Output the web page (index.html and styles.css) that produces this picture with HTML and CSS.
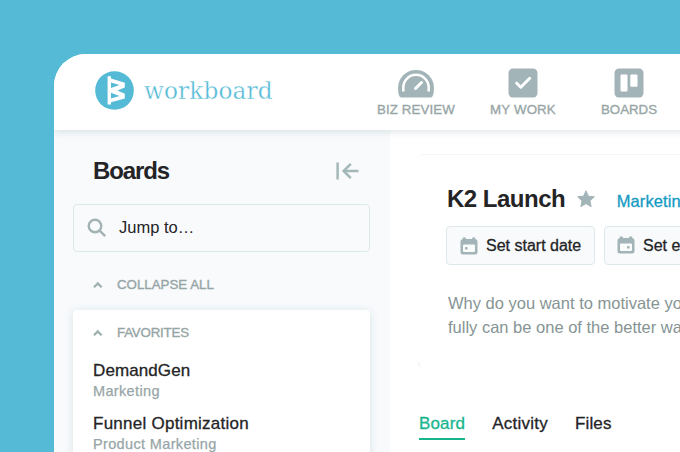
FILE: index.html
```html
<!DOCTYPE html>
<html lang="en">
<head>
<meta charset="utf-8">
<title>Workboard</title>
<link rel="stylesheet" href="styles.css">
</head>
<body>
<div class="app">
  <header class="topbar">
    <div class="brand">
      <svg width="39" height="39" viewBox="0 0 39 39"><circle cx="19.5" cy="19.5" r="19.3" fill="#54bad5"/><path d="M12.600 5.300L16 5.300V7.600L29.800 11.700V16.500L22.500 19.500L29.800 22.700V27.600L16 31.200V33.500H12.600ZM16 11.500V17L24.500 13.900ZM16 21.800V27.400L24.500 25Z" fill="#fff" fill-rule="evenodd"/></svg>
      <span class="brand-name">workboard</span>
    </div>
    <nav class="nav">
      <a class="nav-item nav-review">
        <svg width="38" height="30" viewBox="0 0 38 30"><path d="M4.500 29.500Q1 29.500 1 20A18 18 0 0 1 37 20Q37 29.500 33.500 29.500Z" fill="#a3b4b8"/><path d="M6.300 23.500V19.500A12.700 12.700 0 0 1 31.700 19.500V23.500" fill="none" stroke="#fff" stroke-width="2.500"/><path d="M18.500 20.500L24.500 14.500" stroke="#fff" stroke-width="3" stroke-linecap="round"/></svg>
        <span>BIZ REVIEW</span>
      </a>
      <a class="nav-item nav-work">
        <svg width="30" height="30" viewBox="0 0 30 30"><rect x=".5" y=".5" width="29" height="29" rx="4.500" fill="#a3b4b8"/><path d="M8.700 15.200L12.800 19.200L21.700 10.300" fill="none" stroke="#fff" stroke-width="3" stroke-linecap="round" stroke-linejoin="round"/></svg>
        <span>MY WORK</span>
      </a>
      <a class="nav-item nav-boards">
        <svg width="30" height="30" viewBox="0 0 30 30"><rect x=".5" y=".5" width="29" height="29" rx="4.500" fill="#a3b4b8"/><rect x="6.500" y="6.500" width="7" height="17" rx="1" fill="#fff"/><rect x="16.300" y="6.500" width="7.200" height="12.300" rx="1" fill="#fff"/></svg>
        <span>BOARDS</span>
      </a>
    </nav>
  </header>
  <div class="columns">
    <aside class="sidebar">
      <div class="side-head">
        <h2>Boards</h2>
        <svg width="24" height="20" viewBox="0 0 24 20" fill="none" stroke="#a3b9b9" stroke-width="2.500"><path d="M1.600 1.500V18.500M22.500 10H8M14.800 2.800L7.600 10L14.800 17.200"/></svg>
      </div>
      <div class="search">
        <svg width="20" height="20" viewBox="0 0 20 20" fill="none" stroke="#a3b2b4" stroke-width="2.400"><circle cx="8" cy="8" r="6.300"/><path d="M12.600 12.600L18.200 18.200"/></svg>
        <span>Jump to…</span>
      </div>
      <div class="group-label collapse">
        <svg width="10" height="8" viewBox="0 0 10 8"><path d="M1 6.300L4.800 2.400L8.600 6.300" fill="none" stroke="#9eafaf" stroke-width="2.200"/></svg>
        <span>COLLAPSE ALL</span>
      </div>
      <section class="favorites">
        <div class="group-label">
          <svg width="10" height="8" viewBox="0 0 10 8"><path d="M1 6.300L4.800 2.400L8.600 6.300" fill="none" stroke="#9eafaf" stroke-width="2.200"/></svg>
          <span class="fav-label">FAVORITES</span>
        </div>
        <div class="entry first"><b>DemandGen</b><small>Marketing</small></div>
        <div class="entry"><b class="wide">Funnel Optimization</b><small>Product Marketing</small></div>
      </section>
    </aside>
    <main class="main">
      <section class="board">
        <div class="title-row">
          <h1>K2 Launch</h1>
          <svg width="18" height="18" viewBox="0 0 18 18"><path d="M9 .8L11.400 6.200L17.300 6.800L12.900 10.800L14.200 16.600L9 13.600L3.800 16.600L5.100 10.800L.7 6.800L6.600 6.200Z" fill="#a3b4b8" stroke="#a3b4b8" stroke-linejoin="round"/></svg>
          <a class="team">Marketing</a>
        </div>
        <div class="dates">
          <div class="date-btn">
            <svg width="18" height="18" viewBox="0 0 18 18"><path d="M2.800 .5h3V2h6.400V.500H15.200V2Q17.500 2 17.500 4.500V15Q17.500 17.500 15 17.500H3Q.5 17.500 .5 15V4.500Q.5 2 2.800 2Z" fill="#a3b4b8"/><rect x="3" y="7.500" width="12" height="7.500" rx="1" fill="#fafcfc"/><rect x="5" y="10" width="2.600" height="2.600" rx=".7" fill="#a3b4b8"/></svg>
            <span>Set start date</span>
          </div>
          <div class="date-btn end">
            <svg width="18" height="18" viewBox="0 0 18 18"><path d="M2.800 .5h3V2h6.400V.500H15.200V2Q17.500 2 17.500 4.500V15Q17.500 17.500 15 17.500H3Q.5 17.500 .5 15V4.500Q.5 2 2.800 2Z" fill="#a3b4b8"/><rect x="3" y="7.500" width="12" height="7.500" rx="1" fill="#fafcfc"/><rect x="10" y="10" width="2.600" height="2.600" rx=".7" fill="#a3b4b8"/></svg>
            <span>Set end date</span>
          </div>
        </div>
        <p>Why do you want to motivate you<br>fully can be one of the better ways</p>
        <svg class="corner" width="3" height="5" viewBox="0 0 3 5"><path d="M.5 0Q.5 3 2.500 4.500" fill="none" stroke="#e6eaea"/></svg>
      </section>
      <nav class="tabs">
        <a class="active">Board</a><a class="activity">Activity</a><a>Files</a>
      </nav>
    </main>
  </div>
</div>
</body>
</html>
```
FILE: styles.css
```css
* { box-sizing: border-box; }
body {
  margin: 0;
  width: 680px;
  height: 452px;
  overflow: hidden;
  padding: 54px 0 0 54px;
  background: #54bad5;
  font-family: "Liberation Sans", Arial, sans-serif;
  color: #242426;
}
svg { display: block; flex: none; }
h1, h2, p { margin: 0; }
span, a, b, small { white-space: nowrap; }
.app {
  width: 626px;
  height: 398px;
  border-radius: 32px 0 0 0;
  overflow: hidden;
  background: #fff;
}
.topbar {
  position: relative;
  z-index: 1;
  display: flex;
  height: 76px;
  margin-right: -16px;
  padding-left: 41px;
  background: #fff;
  box-shadow: 0 1px 8px rgba(90, 125, 135, .24);
}
.brand { display: flex; width: 282px; padding-top: 17px; gap: 10px; }
.brand-name {
  font: 25px/40px "DejaVu Serif", serif;
  letter-spacing: .1px;
  color: #54bad5;
  -webkit-text-stroke: .35px #fff;
  transform: scaleX(.93);
  transform-origin: 0 50%;
}
.nav { display: flex; padding-top: 14px; }
.nav-item {
  display: flex;
  flex-direction: column;
  align-items: center;
  font-size: 13.3px;
  line-height: 16px;
  gap: 4px;
  color: #98a6a6;
  -webkit-text-stroke: .35px #98a6a6;
}
.nav-review { width: 78px; letter-spacing: .1px; }
.nav-work { width: 68px; margin-left: 34px; letter-spacing: .15px; }
.nav-boards { width: 58px; margin-left: 43px; }
.columns { display: flex; height: 322px; }
.sidebar { width: 336px; padding: 0 20px; background: #f8fafc; flex: none; }
.side-head {
  display: flex;
  justify-content: space-between;
  align-items: center;
  height: 74px;
  padding: 8px 10px 0 19px;
}
h2 { font-size: 24px; line-height: 28px; letter-spacing: -1.1px; }
.search {
  display: flex;
  align-items: center;
  gap: 12px;
  width: 297px;
  height: 48px;
  margin-left: -1px;
  padding: 0 13px;
  border: 1px solid #dce9eb;
  border-radius: 4px;
  font-size: 16.5px;
}
.search span { margin-top: -2px; }
.group-label {
  display: flex;
  align-items: center;
  gap: 14px;
  height: 16px;
  font-size: 13.3px;
  line-height: 16px;
  color: #96a5a5;
  -webkit-text-stroke: .35px #96a5a5;
}
.fav-label { letter-spacing: -.2px; }
.collapse { margin: 25px 0 17px 19px; }
.favorites {
  width: 297px;
  height: 150px;
  margin-left: -1px;
  padding: 15px 20px;
  border-radius: 4px;
  background: #fff;
  box-shadow: 0 1px 8px rgba(80, 120, 130, .18);
}
.entry { display: flex; flex-direction: column; height: 53px; }
.entry.first { margin-top: 19px; }
.entry b {
  font-size: 17px;
  font-weight: 400;
  line-height: 22px;
  letter-spacing: .1px;
  -webkit-text-stroke: .3px #242426;
}
.entry .wide { letter-spacing: .25px; }
.entry small {
  font-size: 14.5px;
  line-height: 19px;
  letter-spacing: .35px;
  color: #97a6a7;
  -webkit-text-stroke: .25px #97a6a7;
}
.main { width: 290px; padding: 24px 0 0 28px; flex: none; overflow: hidden; }
.board {
  position: relative;
  width: 262px;
  height: 213px;
  padding: 29px 0 0 29px;
  border-top: 1px solid #f3f6f6;
  border-radius: 5px 0 0 5px;
}
.corner { position: absolute; left: 0; bottom: 0; }
.title-row { display: flex; height: 29px; }
.title-row svg { margin: 6px 0 0 12px; }
h1 { font-size: 24px; line-height: 29px; letter-spacing: -.5px; white-space: nowrap; width: 119px; }
.team { margin-left: 21.5px; font-size: 16.5px; line-height: 34px; letter-spacing: .1px; color: #149bc4; -webkit-text-stroke: .3px #149bc4; }
.dates { display: flex; gap: 9px; margin: 13px 0 0 -1px; }
.date-btn {
  display: flex;
  flex: none;
  align-items: center;
  gap: 8px;
  width: 149px;
  height: 39px;
  padding: 0 13px;
  border: 1px solid #dce9eb;
  border-radius: 4px;
  background: #f8fafc;
  font-size: 16px;
  -webkit-text-stroke: .3px #242426;
}
.date-btn.end { padding-left: 12px; }
.date-btn.end svg { margin-top: -2px; }
.board p { margin: 26px 0 0 1px; font-size: 16.5px; line-height: 24px; color: #869494; white-space: nowrap; }
.tabs { display: flex; margin: 46px 0 0 1px; gap: 27px; font-size: 17px; line-height: 22px; -webkit-text-stroke: .3px; }
.tabs a { height: 27px; letter-spacing: .15px; }
.tabs .active { color: #18b58d; border-bottom: 2px solid #18b58d; }
.tabs .activity { letter-spacing: .25px; }
```
